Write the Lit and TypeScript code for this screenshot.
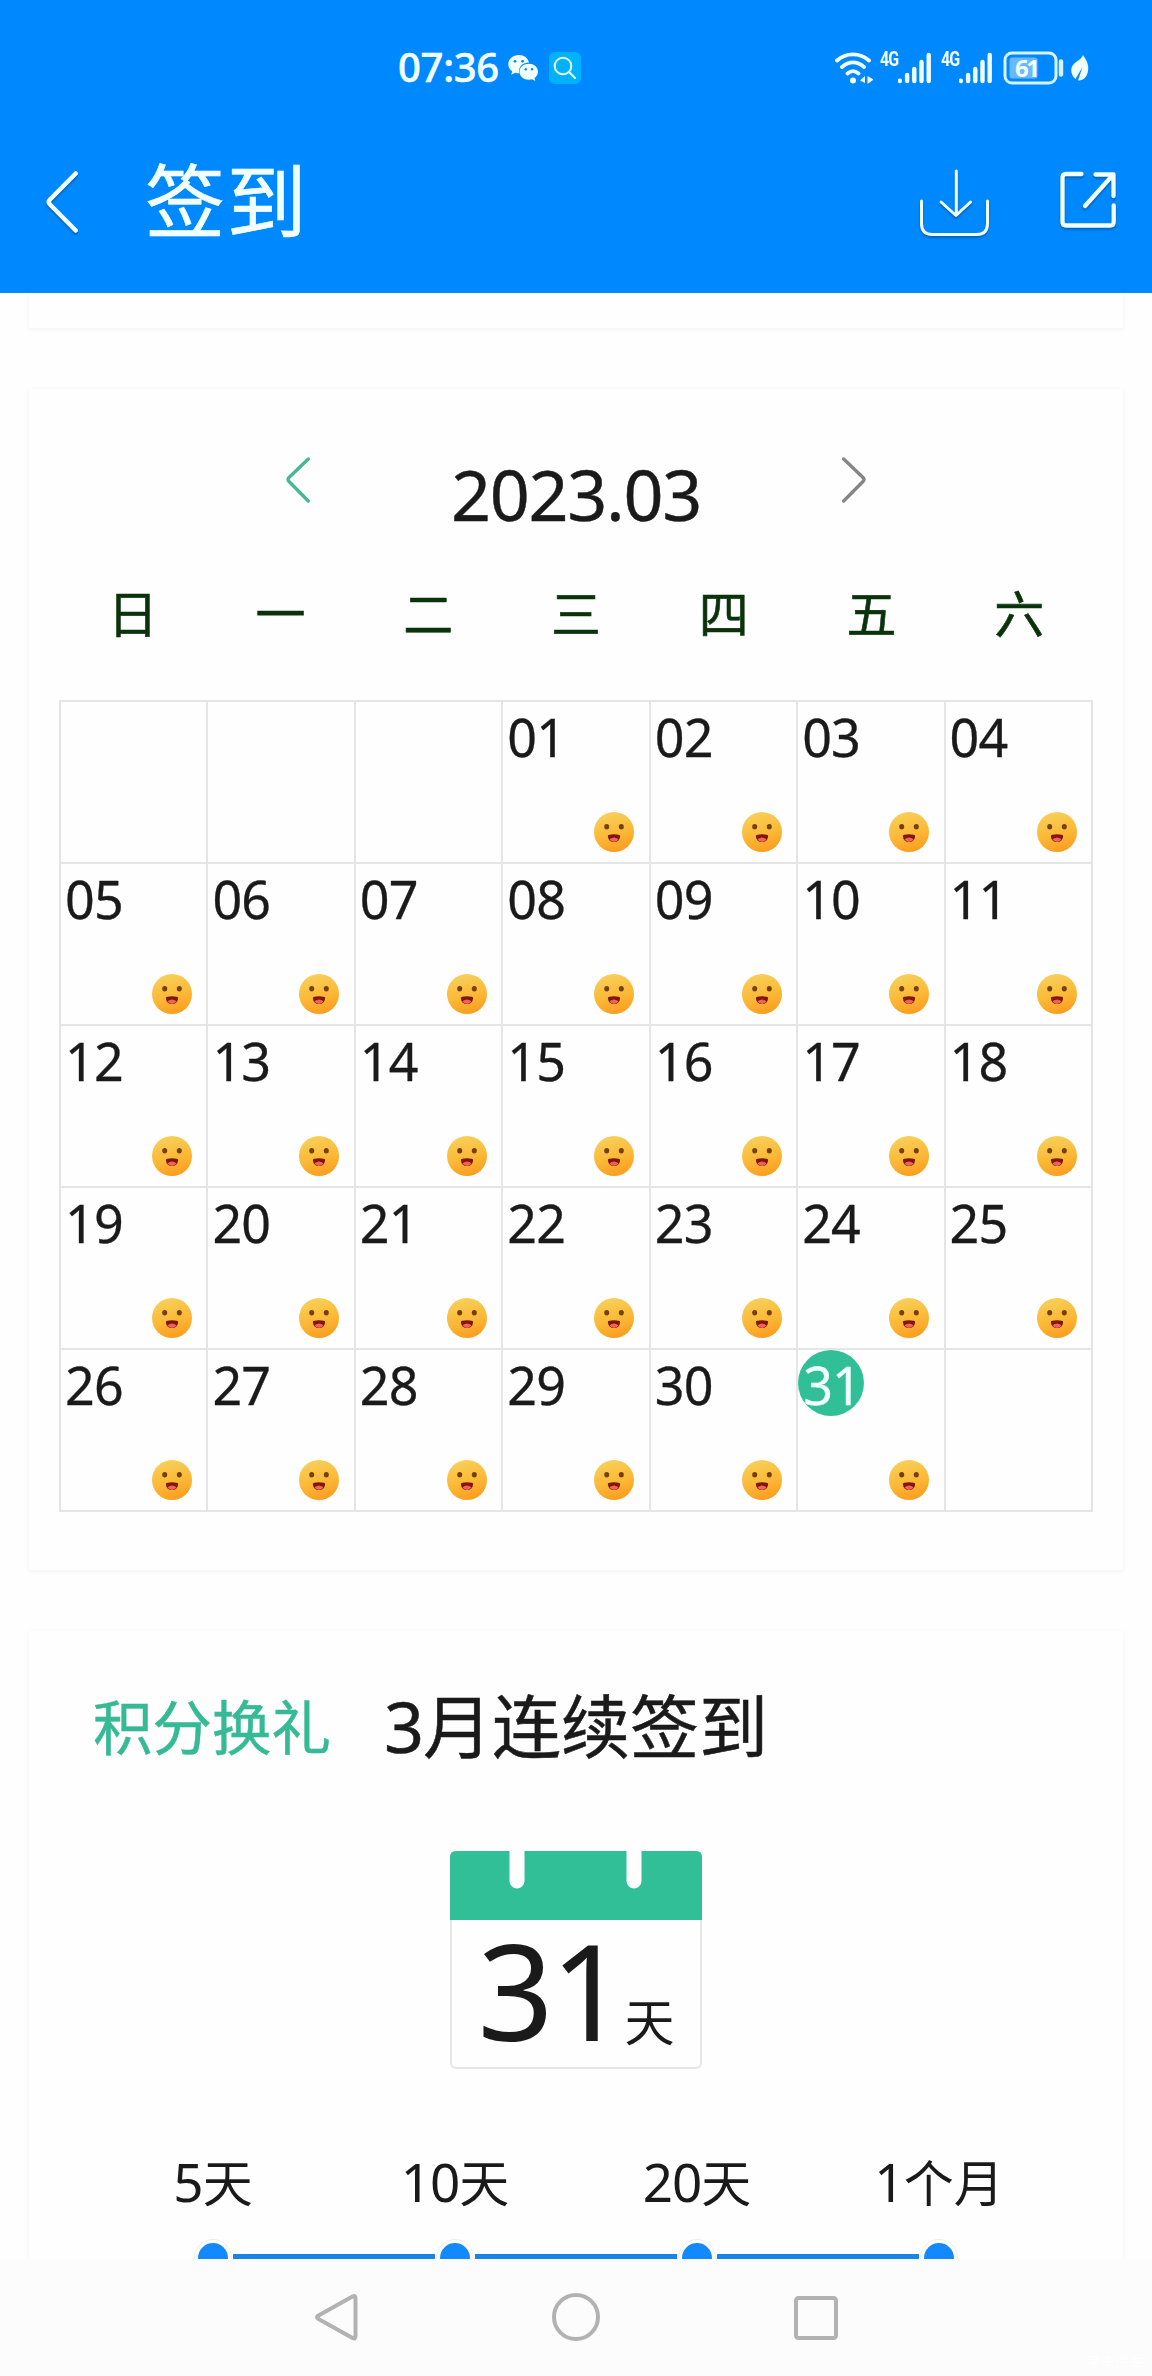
import { LitElement, html, css, svg } from "lit";
import { customElement } from "lit/decorators.js";

const WEEKDAYS = ["日", "一", "二", "三", "四", "五", "六"];
const FIRST_WEEKDAY = 3;
const DAYS = 31;
const TODAY = 31;
const STEPS = [
  { num: "5", unit: "天" },
  { num: "10", unit: "天" },
  { num: "20", unit: "天" },
  { num: "1", unit: "个月" },
];

const pad = (n: number) => String(n).padStart(2, "0");

@customElement("status-bar")
class StatusBar extends LitElement {
  static styles = css`
    :host {
      display: flex;
      align-items: center;
      height: 135px;
      color: #f2ffff;
      font-family: "Noto Sans", sans-serif;
    }
    svg { display: block; flex: none; }
    .time {
      width: 98px;
      margin-left: 398px;
      padding-bottom: 2px;
      font-size: 40px;
      font-weight: 500;
      line-height: 60px;
      letter-spacing: -0.3px;
      white-space: nowrap;
      -webkit-text-stroke: 0.5px #f2ffff;
    }
    .wechat { margin-left: 12px; }
    .search { margin-left: 11px; }
    .wifi { margin-left: 254px; }
    .signal { display: flex; margin-left: 7px; }
    .net {
      width: 18px;
      height: 32px;
      font-family: "Roboto", sans-serif;
      font-size: 20px;
      font-weight: 700;
      line-height: 15px;
      letter-spacing: -1.2px;
      transform: scaleX(0.8);
      transform-origin: left;
    }
    .battery { margin-left: 10px; }
    .leaf { margin-left: 5px; }
    .signal + .signal { margin-left: 9px; }
  `;

  signal() {
    return html`<div class="signal">
      <span class="net">4G</span>
      <svg width="34" height="32" viewBox="0 0 34 32" stroke="#f2ffff" stroke-width="4.4" stroke-linecap="round">
        <path d="M1.900 28.800V29M9.100 23V29M16.300 17V29M23.500 10V29M30.700 3V29" />
      </svg>
    </div>`;
  }

  render() {
    return html`
      <span class="time">07:36</span>
      <svg class="wechat" width="30" height="28" viewBox="0 0 30 28">
        <path fill="#f2ffff" d="M11 1C4.800 1 .3 5 .3 10.200c0 3 1.500 5.500 3.900 7.100l-1 3.500 4-2c1.300.4 2.600.5 4 .5C10 12 15.500 8.400 21 8.500 20 4 16 1 11 1z" />
        <path fill="#f2ffff" d="M20.800 9.700c-5.100 0-9.300 3.500-9.300 8s4.200 8 9.300 8c1.200 0 2.300-.2 3.300-.5l3.200 1.700-.8-2.900c2.200-1.500 3.500-3.700 3.500-6.300 0-4.500-4.100-8-9.200-8z" />
        <g fill="#0089ff"><circle cx="7" cy="7.300" r="1.400" /><circle cx="14.500" cy="7.300" r="1.400" /><circle cx="17.700" cy="15.200" r="1.200" /><circle cx="24" cy="15.200" r="1.200" /></g>
      </svg>
      <svg class="search" width="32" height="32" viewBox="0 0 32 32" fill="none" stroke="#e8ffff" stroke-width="2">
        <rect width="32" height="32" rx="6" fill="#00b2fb" stroke="none" />
        <circle cx="14" cy="14" r="8.300" /><path d="M20 20l6 6" stroke-linecap="round" />
      </svg>
      <svg class="wifi" width="38" height="32" viewBox="0 0 38 32" fill="none" stroke="#f2ffff" stroke-width="3.800" stroke-linecap="round">
        <path d="M2 8.500C11 .3 25 .3 34 8.500M7 15C14 9 22 9 29 15M12.500 21.500c3.500-3 7.500-3 11 0" />
        <circle cx="18" cy="28.500" r="3" fill="#f2ffff" stroke="none" />
        <path d="M25 28.500l5-4.500v7zM32.500 24v8l6-4.500z" fill="#f2ffff" stroke="none" />
      </svg>
      ${this.signal()}${this.signal()}
      <svg class="battery" width="62" height="34" viewBox="0 0 62 34" fill="none" stroke="#d6f4ff" stroke-width="3">
        <rect x="2" y="2" width="51" height="30" rx="7" />
        <rect x="6.500" y="6.500" width="28" height="21" rx="3" fill="#6ab8ff" stroke="none" />
        <path d="M58 10.500v13" stroke-width="4.400" stroke-linecap="round" />
        <text x="12" y="25.500" fill="#f2ffff" stroke="none" font-size="24" font-weight="700" textLength="25">61</text>
      </svg>
      <svg class="leaf" width="20" height="28" viewBox="0 0 20 28">
        <path fill="#f2ffff" d="M13 1c4 6 6 10 5 16-1 6-5 10-10 9.500l4.500-13.500L5.500 25C1 21 0 15 3 11c2.500-3.500 8-5 10-10z" />
      </svg>
    `;
  }
}

@customElement("tool-bar")
class ToolBar extends LitElement {
  static styles = css`
    :host {
      display: flex;
      align-items: center;
      height: 131px;
      padding: 0 31px 27px 40px;
    }
    svg {
      display: block;
      overflow: visible;
      fill: none;
      stroke: #f2ffff;
      stroke-linecap: round;
      stroke-linejoin: round;
      filter: drop-shadow(0 2px 1px rgba(0, 40, 90, 0.4));
    }
    .title {
      flex: 1;
      margin-left: 61px;
      padding-bottom: 10px;
      color: #f2ffff;
      font-family: "Noto Sans CJK SC", sans-serif;
      font-size: 80px;
      line-height: 100px;
      letter-spacing: 1.5px;
      -webkit-text-stroke: 0.6px #f2ffff;
    }
    .share { margin-left: 60px; }
  `;

  render() {
    return html`
      <svg width="44" height="66" viewBox="0 0 44 66" stroke-width="4.500">
        <path d="M35.700 5.500L10 31.500q-2.500 2.500 0 5L35.700 62.500" />
      </svg>
      <span class="title">签到</span>
      <svg width="80" height="74" viewBox="0 0 80 74" stroke-width="3">
        <path d="M41.300 7V51M26 38L41 51.500 55.500 38M6.500 37V59.500q0 11 11 11H61.500q11 0 11-11V37" />
      </svg>
      <svg class="share" width="66" height="66" viewBox="0 0 66 66" stroke-width="4.300">
        <path d="M26.500 6H11Q7.500 6 7.500 9.500V54Q7.500 57.500 11 57.500H55.200Q58.700 57.500 58.700 54V37.500" />
        <path d="M40.500 6.500H58.500V28M57 8L30 38" />
      </svg>
    `;
  }
}

@customElement("month-calendar")
class MonthCalendar extends LitElement {
  static styles = css`
    :host { display: block; }
    svg { display: block; fill: none; stroke-linecap: round; stroke-linejoin: round; }
    .nav {
      display: flex;
      align-items: center;
      justify-content: space-between;
      width: 580px;
      height: 181px;
      margin: 0 auto;
    }
    .month {
      padding-top: 28px;
      color: #1a1a1a;
      font-family: "Noto Sans", sans-serif;
      font-size: 70px;
      line-height: 90px;
      letter-spacing: -1.3px;
      -webkit-text-stroke: 0.4px #1a1a1a;
    }
    .week {
      display: grid;
      grid-template-columns: repeat(7, 1fr);
      height: 130px;
      color: #0b330b;
      font-family: "Noto Sans CJK SC", sans-serif;
      font-size: 50px;
      line-height: 82px;
      text-align: center;
      -webkit-text-stroke: 0.6px #0b330b;
    }
    .grid {
      display: grid;
      grid-template-columns: repeat(7, 1fr);
      grid-auto-rows: 162px;
      border: solid #e5e5e5;
      border-width: 2px 0 0 2px;
    }
    .cell {
      box-sizing: border-box;
      display: flex;
      flex-direction: column;
      justify-content: space-between;
      border: solid #e5e5e5;
      border-width: 0 2px 2px 0;
      padding-bottom: 10px;
    }
    .num {
      width: 66px;
      height: 66px;
      padding-left: 4px;
      box-sizing: border-box;
      border-radius: 50%;
      color: #1a1a1a;
      font-family: "Noto Sans", sans-serif;
      font-size: 52px;
      line-height: 69px;
      letter-spacing: -0.8px;
      white-space: nowrap;
      -webkit-text-stroke: 0.3px currentColor;
    }
    .today { padding-left: 5px; background: #31bf97; color: #f2ffff; }
    .face {
      align-self: flex-end;
      margin-right: 14.5px;
      border-radius: 50%;
      background: linear-gradient(165deg, #f8cf58 10%, #fbb836 55%, #fa9a1e 95%);
    }
  `;

  face() {
    return html`<svg class="face" width="40" height="40" viewBox="0 0 40 40">
      <ellipse cx="12.700" cy="14.800" rx="2.500" ry="2.700" fill="#754000" />
      <ellipse cx="27.300" cy="14.800" rx="2.500" ry="2.700" fill="#754000" />
      <path d="M13.800 24q0-1.800 6.200-1.800T26.200 24Q25.500 30 20 30T13.800 24z" fill="#7c170b" />
      <path d="M15.500 27.300Q20 23.800 24.500 27.300 23 30 20 30T15.500 27.300z" fill="#f2605c" />
    </svg>`;
  }

  cell(i: number) {
    const day = i - FIRST_WEEKDAY + 1;
    if (day < 1 || day > DAYS) return html`<div class="cell"></div>`;
    return html`<div class="cell">
      <span class="num ${day === TODAY ? "today" : ""}">${pad(day)}</span>
      ${this.face()}
    </div>`;
  }

  render() {
    return html`
      <div class="nav">
        <svg width="24" height="46" viewBox="0 0 24 46" stroke="#49b496" stroke-width="3.300">
          <path d="M22.300 2L3 20.500q-2 2 0 4L22.300 44" />
        </svg>
        <span class="month">2023.03</span>
        <svg width="24" height="46" viewBox="0 0 24 46" stroke="#858585" stroke-width="3.300">
          <path d="M1.700 2L21 20.500q2 2 0 4L1.700 44" />
        </svg>
      </div>
      <div class="week">${WEEKDAYS.map((d) => html`<span>${d}</span>`)}</div>
      <div class="grid">${Array.from({ length: 35 }, (_, i) => this.cell(i))}</div>
    `;
  }
}

@customElement("streak-panel")
class StreakPanel extends LitElement {
  static styles = css`
    :host {
      display: block;
      color: #1a1a1a;
      font-family: "Noto Sans CJK SC", sans-serif;
    }
    svg { display: block; }
    .d { font-family: "Noto Sans", sans-serif; }
    .head {
      display: flex;
      align-items: center;
      height: 192px;
      box-sizing: border-box;
      padding-left: 64px;
      padding-bottom: 6px;
      white-space: nowrap;
    }
    .gift { color: #36ba96; font-size: 59.5px; line-height: 90px; -webkit-text-stroke: 0.5px #36ba96; }
    .title { margin-left: 53px; font-size: 69px; line-height: 100px; -webkit-text-stroke: 0.5px #1a1a1a; }
    .title .d { font-size: 70px; letter-spacing: -1px; }
    .sheet {
      box-sizing: border-box;
      width: 252px;
      height: 218px;
      margin: 28px auto 84px;
      border: 2px solid #e5e5e5;
      border-top: 0;
      border-radius: 6px;
    }
    .strip { margin: 0 -2px; }
    .count {
      display: flex;
      align-items: baseline;
      justify-content: center;
      height: 147px;
      line-height: 139px;
      white-space: nowrap;
    }
    .count .d { font-size: 133px; letter-spacing: -3px; }
    .count .unit { margin-left: 1px; font-size: 50px; }
    .steps {
      display: grid;
      grid-template-columns: repeat(4, 242px);
      justify-content: center;
      height: 60px;
      margin-bottom: 26px;
      font-size: 50px;
      line-height: 54px;
      text-align: center;
      white-space: nowrap;
    }
    .steps .d { font-size: 53px; letter-spacing: -1px; }
    .track { margin: 0 auto; }
  `;

  render() {
    return html`
      <div class="head">
        <span class="gift">积分换礼</span>
        <span class="title"><span class="d">3</span>月连续签到</span>
      </div>
      <div class="sheet">
        <svg class="strip" width="252" height="69" viewBox="0 0 252 69">
          <path fill="#31bf97" d="M6 0H59.500V30a7.500 7.500 0 0 0 15 0V0H176.500V30a7.500 7.500 0 0 0 15 0V0H246q6 0 6 6V69H0V6q0-6 6-6z" />
        </svg>
        <div class="count"><span class="d">31</span><span class="unit">天</span></div>
      </div>
      <div class="steps">
        ${STEPS.map((s) => html`<span><span class="d">${s.num}</span>${s.unit}</span>`)}
      </div>
      <svg class="track" width="968" height="38" viewBox="0 0 968 38">
        ${STEPS.map((_, i) => {
          const x = 121 + i * 242;
          return svg`
            <circle cx=${x} cy="19" r="18.500" fill="none" stroke="#dfe8ee" stroke-width="0.800" />
            <circle cx=${x} cy="19" r="15" fill="#1389ff" />
            ${i < STEPS.length - 1 ? svg`<rect x=${x + 20} y="15" width="202" height="6" fill="#1a84e4" />` : null}
          `;
        })}
      </svg>
    `;
  }
}

@customElement("nav-keys")
class NavKeys extends LitElement {
  static styles = css`
    :host {
      display: flex;
      justify-content: center;
      position: relative;
      height: 117px;
      background: #fcfcfc;
    }
    svg { display: block; fill: none; stroke: #b2b2b2; stroke-width: 4; stroke-linejoin: round; }
    .mark {
      position: absolute;
      right: 8px;
      bottom: 4px;
      color: #fff;
      font: 14.5px/20px "Noto Sans CJK SC", sans-serif;
    }
  `;

  render() {
    return html`
      <svg width="240" height="117" viewBox="0 0 240 117"><path d="M136.500 37.500q3-1.500 3 2V77q0 3.500-3 2L102.500 60q-3-1.700 0-3.400z" /></svg>
      <svg width="240" height="117" viewBox="0 0 240 117"><circle cx="120" cy="58" r="22" /></svg>
      <svg width="240" height="117" viewBox="0 0 240 117"><rect x="100" y="39" width="40" height="40" rx="2.500" /></svg>
      <span class="mark">爱卡汽车</span>
    `;
  }
}

@customElement("app-root")
class AppRoot extends LitElement {
  static styles = css`
    :host {
      display: flex;
      flex-direction: column;
      width: 1152px;
      height: 2376px;
      overflow: hidden;
      background: #fff;
    }
    .top { flex: none; height: 293px; background: #0089ff; }
    .content {
      flex: none;
      display: flex;
      flex-direction: column;
      gap: 61px;
      height: 1966px;
      overflow: hidden;
      background: #fefefe;
    }
    .card {
      flex: none;
      box-sizing: border-box;
      margin: 0 29px;
      background: #fefefe;
      box-shadow: 0 1px 5px rgba(0, 0, 0, 0.05);
    }
    .tail { height: 35px; }
    .month { height: 1181px; padding: 0 30px; }
    .streak { height: 720px; }
  `;

  render() {
    return html`
      <div class="top"><status-bar></status-bar><tool-bar></tool-bar></div>
      <div class="content">
        <div class="card tail"></div>
        <div class="card month"><month-calendar></month-calendar></div>
        <div class="card streak"><streak-panel></streak-panel></div>
      </div>
      <nav-keys></nav-keys>
    `;
  }
}
